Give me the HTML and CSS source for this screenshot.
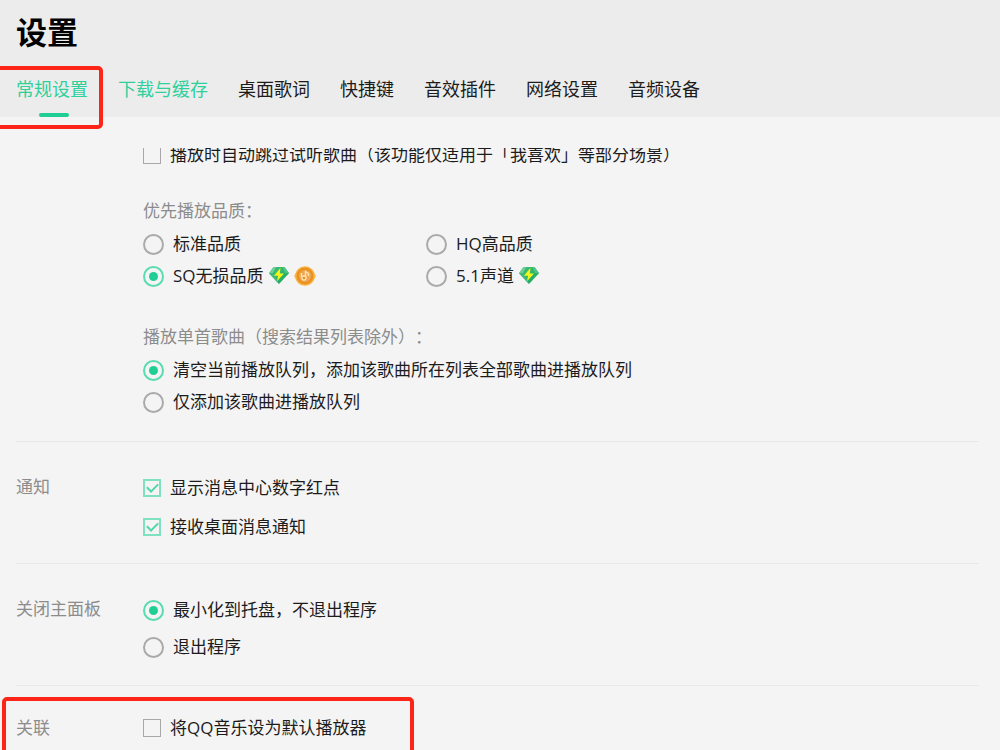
FILE: index.html
```html
<!DOCTYPE html>
<html lang="zh-CN">
<head>
<meta charset="utf-8">
<meta name="viewport" content="width=device-width, initial-scale=1">
<title>设置</title>
<link rel="stylesheet" href="styles.css">
</head>
<body>
<svg class="sprite" aria-hidden="true">
  <defs>
    <linearGradient id="gem-fill" x1="0" y1="0" x2="1" y2="1">
      <stop offset="0" stop-color="#45c07a"/>
      <stop offset="0.5" stop-color="#2fb56a"/>
      <stop offset="1" stop-color="#18a05e"/>
    </linearGradient>
    <symbol id="gem" viewBox="0 0 22 22">
      <path d="M5.500 2H16.500L21 8.200L11 19L1 8.200Z" fill="url(#gem-fill)"/>
      <path d="M5.500 2L1 8.200L5 8L8 2Z" fill="#6fcf97"/>
      <path d="M16.500 2L21 8.200L17 8L14.500 2Z" fill="#52c488"/>
      <path d="M1 8.200L11 19L6 9Z" fill="#43bb78"/>
      <path d="M12.500 2.800L6 10.800H10L9 16.200L16 8.600H11.800Z" fill="#f3f51c"/>
    </symbol>
    <symbol id="coin" viewBox="0 0 22 22">
      <path d="M3 6L0 11L3 16H19L22 11L19 6Z" fill="#fcc14f"/>
      <circle cx="11" cy="11" r="9.800" fill="#f9b03a"/>
      <circle cx="11" cy="11" r="8.300" fill="#e88f20"/>
      <circle cx="11" cy="11" r="6.200" fill="#f0a64c"/>
      <path d="M11.500 13V6.500L14.500 8.500V11M7.500 8V12" fill="none" stroke="#fde3b4" stroke-width="1.400"/>
      <circle cx="10" cy="13" r="2" fill="#e88f20" stroke="#fde3b4" stroke-width="1.300"/>
    </symbol>
  </defs>
</svg>

<header class="header">
  <h1 class="title">设置</h1>
  <nav class="tabs">
    <a class="tab tab-active" href="#general" aria-current="page">常规设置<span class="mark mark-tab"></span></a>
    <a class="tab tab-green" href="#download">下载与缓存</a>
    <a class="tab" href="#lyrics">桌面歌词</a>
    <a class="tab" href="#hotkeys">快捷键</a>
    <a class="tab" href="#effects">音效插件</a>
    <a class="tab" href="#network">网络设置</a>
    <a class="tab" href="#audio">音频设备</a>
  </nav>
</header>

<main class="viewport">
  <div class="scrolled">
    <section class="section section-play">
      <div class="options">
        <label class="option"><input type="checkbox" class="box">播放时自动跳过试听歌曲（该功能仅适用于「我喜欢」等部分场景）</label>
        <fieldset class="group group-quality">
          <legend class="legend">优先播放品质：</legend>
          <div class="pairs">
            <label class="option"><input type="radio" name="quality" class="dot">标准品质</label>
            <label class="option"><input type="radio" name="quality" class="dot">HQ高品质</label>
            <label class="option"><input type="radio" name="quality" class="dot" checked><span class="badged">SQ无损品质<svg class="icon"><use href="#gem"/></svg><svg class="icon"><use href="#coin"/></svg></span></label>
            <label class="option"><input type="radio" name="quality" class="dot"><span class="badged">5.1声道<svg class="icon"><use href="#gem"/></svg></span></label>
          </div>
        </fieldset>
        <fieldset class="group group-single">
          <legend class="legend">播放单首歌曲（搜索结果列表除外）：</legend>
          <label class="option"><input type="radio" name="single" class="dot" checked>清空当前播放队列，添加该歌曲所在列表全部歌曲进播放队列</label>
          <label class="option"><input type="radio" name="single" class="dot">仅添加该歌曲进播放队列</label>
        </fieldset>
      </div>
    </section>

    <section class="section section-notice">
      <h2 class="name">通知</h2>
      <div class="options">
        <label class="option"><input type="checkbox" class="box" checked>显示消息中心数字红点</label>
        <label class="option"><input type="checkbox" class="box" checked>接收桌面消息通知</label>
      </div>
    </section>

    <section class="section section-close">
      <h2 class="name">关闭主面板</h2>
      <div class="options">
        <label class="option"><input type="radio" name="close" class="dot" checked>最小化到托盘，不退出程序</label>
        <label class="option"><input type="radio" name="close" class="dot">退出程序</label>
      </div>
    </section>

    <section class="section section-link">
      <h2 class="name">关联</h2>
      <div class="options">
        <label class="option"><input type="checkbox" class="box">将QQ音乐设为默认播放器</label>
      </div>
      <span class="mark mark-link"></span>
    </section>
  </div>
</main>
</body>
</html>
```
FILE: styles.css
```css
* {
  box-sizing: border-box;
}

body {
  margin: 0;
  height: 100vh;
  display: flex;
  flex-direction: column;
  overflow: hidden;
  background: #f4f4f4;
  color: #1c1c1c;
  font-family: "Open Sans", "Noto Sans CJK SC", sans-serif;
  font-size: 17px;
  line-height: 32px;
  text-spacing-trim: space-all;
}

.sprite {
  position: absolute;
  width: 0;
  height: 0;
}

.header {
  flex: none;
  padding: 12px 16px 0;
  background: #ececec;
}

.title {
  margin: 0;
  color: #000;
  font-size: 31px;
  line-height: 40px;
  font-weight: 700;
}

.tabs {
  display: flex;
  gap: 30px;
  margin-top: 9px;
}

.tab {
  position: relative;
  color: #1c1c1c;
  font-size: 18px;
  line-height: 56px;
  text-decoration: none;
  white-space: nowrap;
}

.tab-active,
.tab-green {
  color: #2fd09a;
}

.tab-active::after {
  content: "";
  position: absolute;
  left: 23px;
  bottom: 0;
  width: 30px;
  height: 4px;
  border-radius: 2px;
  background: #1fce94;
}

/* Red highlight frames */
.mark {
  position: absolute;
  border: 4px solid #fd2418;
  border-radius: 5px;
  pointer-events: none;
}

.mark-tab {
  top: 5px;
  right: -15px;
  bottom: -12px;
  left: -24px;
  z-index: 1;
}

.mark-link {
  top: 11px;
  left: -14px;
  width: 412px;
  height: 80px;
}

.viewport {
  flex: 1;
  min-height: 0;
  margin-top: 31px;
  padding: 0 21px 0 16px;
  overflow: hidden;
}

.scrolled {
  margin-top: -9px;
}

.section {
  position: relative;
  display: grid;
  grid-template-columns: 127px 1fr;
  border-bottom: 1px solid #e8e8e8;
}

.section-play {
  padding-bottom: 23px;
}

.section-notice {
  padding: 30px 0 20px;
}

.section-close {
  padding: 30px 0 22px;
}

.section-link {
  padding: 26px 0 30px;
}

.name {
  margin: 0;
  color: #8c8c8c;
  font-size: 17px;
  line-height: 30px;
  font-weight: 400;
}

.section-link .name {
  line-height: 32px;
}

.options {
  grid-column: 2;
  display: flex;
  flex-direction: column;
}

.section-notice .options {
  gap: 7px;
}

.section-close .options {
  gap: 5px;
}

.option {
  display: flex;
  align-items: center;
  gap: 9px;
  height: 32px;
}

.group {
  min-width: 0;
  margin: 0;
  padding: 0;
  border: 0;
}

.group-quality {
  margin-top: 23px;
}

.group-single {
  margin-top: 28px;
}

.legend {
  padding: 0;
  color: #8c8c8c;
  line-height: 34px;
}

.pairs {
  display: grid;
  grid-template-columns: 283px 1fr;
}

.badged {
  display: flex;
  align-items: center;
  gap: 4px;
}

.icon {
  width: 22px;
  height: 22px;
}

.box,
.dot {
  appearance: none;
  flex: none;
  margin: 0;
  display: grid;
  place-items: center;
}

.box {
  width: 18px;
  height: 18px;
  border: 1px solid #a8a8a8;
}

.box:checked {
  border: 2px solid #7fe1bf;
}

.box:checked::before {
  content: "";
  width: 9px;
  height: 5px;
  margin-top: -3px;
  border: solid #4fd6a9;
  border-width: 0 0 2px 2px;
  transform: rotate(-45deg);
}

.dot {
  width: 21px;
  height: 21px;
  border: 2px solid #aaa;
  border-radius: 50%;
}

.dot:checked {
  border-color: #5adcb0;
}

.dot:checked::before {
  content: "";
  width: 9px;
  height: 9px;
  border-radius: 50%;
  background: #1fce94;
}
```
